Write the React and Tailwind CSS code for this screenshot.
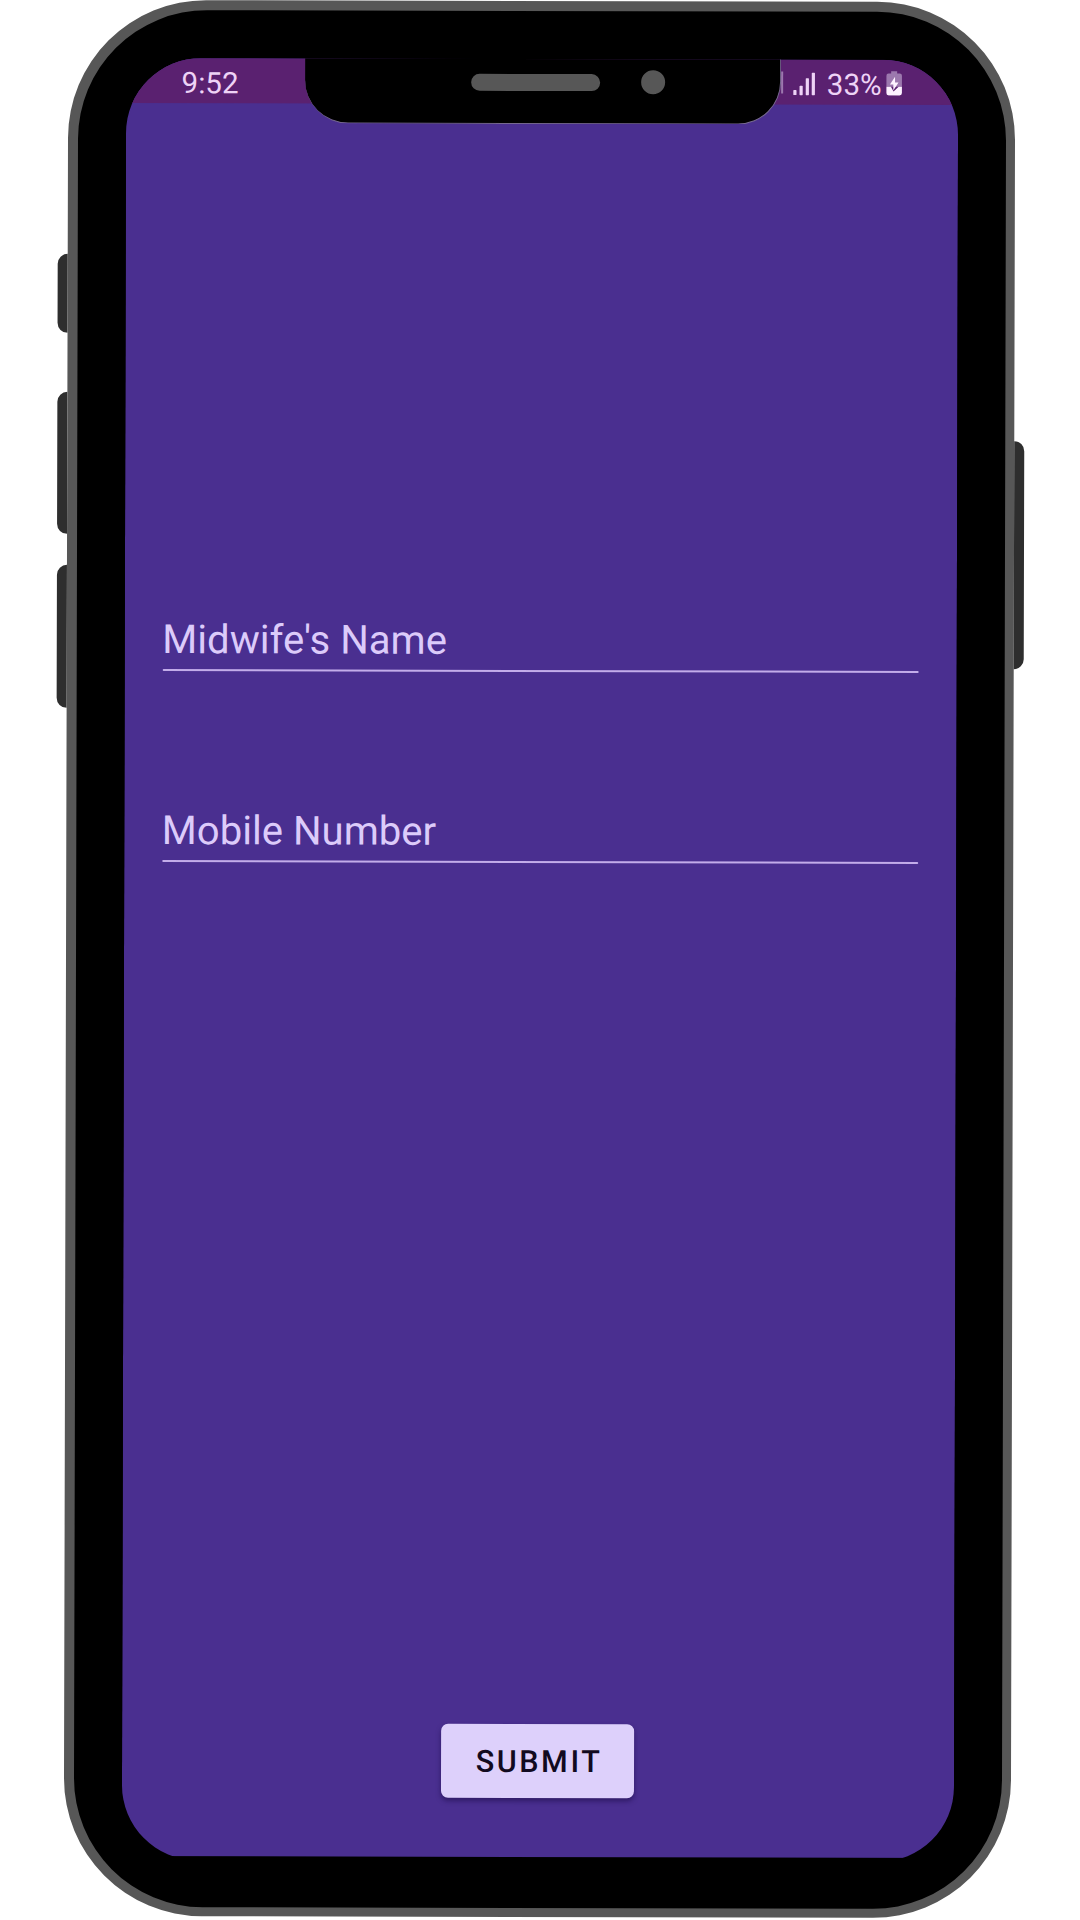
import React from "react";

function SideKey({ className }) {
  return <div className={`w-full bg-[#2e2e2e] ${className}`} />;
}

function SignalIcon() {
  return (
    <svg width="24" height="26" viewBox="0 0 24 26" fill="#eed3f6">
      <rect x="1.2" y="19.5" width="3.2" height="5" rx="0.6" />
      <rect x="7.4" y="15" width="3.2" height="9.5" rx="0.6" />
      <rect x="13.6" y="7.5" width="3.2" height="17" rx="0.6" />
      <rect x="19.6" y="2" width="3.2" height="22.5" rx="0.6" />
    </svg>
  );
}

function BatteryIcon() {
  return (
    <svg width="16" height="25" viewBox="0 0 16 25">
      <path d="M5 0.5h6v2.2h2.6q2.2 0 2.2 2.2v11H0.2v-11q0-2.2 2.2-2.2H5z" fill="#9c78ae" />
      <path d="M0.2 15.8H4.8L7.4 20.6 12.5 15.8h3.3v6.4q0 2.4-2.4 2.4H2.6q-2.4 0-2.4-2.4z" fill="#fdf2ff" />
      <path d="M8.9 6 3.8 13.6h3.4v6L12.4 11.6H8.9z" fill="#fdf2ff" />
    </svg>
  );
}

function Field({ label, className }) {
  return (
    <label className={`block w-[756px] ${className}`}>
      <span className="block h-[48px] text-[40px] leading-[48px] tracking-[0.06px] text-[#dccbfa]">
        {label}
      </span>
      <span className="mt-[5px] block h-[2px] rounded-full bg-[#c3adea]" />
    </label>
  );
}

function Notch() {
  return (
    <div className="absolute left-[179px] top-[-1px] flex h-[66px] w-[476px] rounded-b-[43px] border-b border-r border-[#76698f] bg-black">
      <div className="ml-[166px] mt-[16px] h-[16.5px] w-[129px] rounded-full bg-[#575757]" />
      <div className="ml-[41px] mt-[12px] h-[24px] w-[24px] rounded-full bg-[#575757]" />
    </div>
  );
}

function StatusBar() {
  return (
    <div className="flex h-[45px] items-start justify-between bg-[#5a2170] text-[29.5px] leading-[34px] text-[#eed3f6]">
      <span className="ml-[55.5px] mt-[8px]">9:52</span>
      <div className="mr-[56.5px] flex items-start">
        <span className="mr-[9px] mt-[12px] h-[22px] w-[2px] bg-[#9c78ae]" />
        <span className="mt-[11px]">
          <SignalIcon />
        </span>
        <span className="ml-[10.5px] mt-[8px]">33%</span>
        <span className="ml-[4px] mt-[11px]">
          <BatteryIcon />
        </span>
      </div>
    </div>
  );
}

export default function App() {
  return (
    <div className="h-[1920px] w-[1080px] overflow-hidden bg-white pl-[56px] pt-[1.2px] font-['Roboto',sans-serif]">
      <div className="flex h-[1916px] w-[967px] rotate-[0.14deg]">
        <div className="w-[10px] shrink-0 pt-[253.5px]">
          <SideKey className="h-[79px] rounded-l-[10px]" />
          <SideKey className="mt-[59px] h-[142px] rounded-l-[10px]" />
          <SideKey className="mt-[31px] h-[143px] rounded-l-[10px]" />
        </div>

        <div className="h-full w-[947px] shrink-0 rounded-[138px] bg-[#575757] p-[9.5px]">
          <div className="h-full rounded-[129px] bg-black pl-[48.5px] pt-[48.5px]">
            <div className="h-[1802px] w-[832px] overflow-hidden rounded-[75px]">
              <div className="relative flex h-[1797.5px] flex-col bg-[#4a2f90]">
                <StatusBar />
                <Notch />
                <Field label="Midwife's Name" className="ml-[37.5px] mt-[513px]" />
                <Field label="Mobile Number" className="ml-[37.5px] mt-[135.5px]" />
                <button className="ml-[319px] mt-[861px] h-[74px] w-[193px] rounded-[7px] bg-[#ddd0fb] pl-[3px] pt-[3px] text-[30.5px] font-medium leading-none tracking-[2.6px] text-[#120a20] shadow-[0_3px_5px_rgba(20,5,60,0.5)]">
                  SUBMIT
                </button>
              </div>
            </div>
          </div>
        </div>

        <div className="w-[10px] shrink-0 pt-[438.5px]">
          <SideKey className="h-[228px] rounded-r-[10px]" />
        </div>
      </div>
    </div>
  );
}
